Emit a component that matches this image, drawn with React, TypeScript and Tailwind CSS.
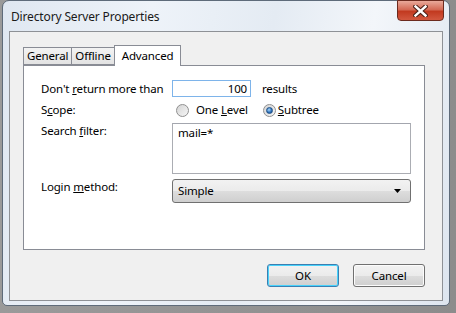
import React from 'react';

const ui = { fontFamily: '"Noto Sans", "Open Sans", sans-serif' };

const Radio: React.FC<{ checked?: boolean }> = ({ checked }) => (
  <span className="relative w-[13px] h-[13px] rounded-full border border-[#8f8f8f] bg-[linear-gradient(135deg,#d4d4d4,#f6f6f6)] flex items-center justify-center shrink-0">
    {checked && (
      <span className="w-[7px] h-[7px] rounded-full bg-[radial-gradient(circle_at_40%_35%,#a8d8fb,#2a6db8_60%,#1b4f8f)] border border-[#1d4f85]" />
    )}
  </span>
);

const Tab: React.FC<{ label: string; active?: boolean }> = ({ label, active }) => (
  <div
    className={
      active
        ? 'h-[21px] px-[7px] pt-[1px] border border-b-0 border-[#898c95] bg-white relative top-[1px] -mx-[1px] z-10 leading-[18px]'
        : 'h-[18px] px-[3px] border border-[#898c95] bg-[linear-gradient(#f3f3f3,#e3e3e3)] leading-[16px]'
    }
  >
    {label}
  </div>
);

export default function App() {
  return (
    <div className="w-[456px] h-[313px] bg-[linear-gradient(90deg,#9a9a9a,#8c8c8c)] overflow-hidden text-[#000] text-[11.5px] tracking-[-0.15px] whitespace-nowrap" style={ui}>
      <div className="ml-[2px] w-[448px] h-[306px] rounded-t-[7px] rounded-b-[5px] border border-[#5e6b7a] bg-[linear-gradient(100deg,#dfe7f1_0%,#eef3f9_30%,#e4ebf3_55%,#f3f6fa_75%,#dde5ef_100%)] flex flex-col relative">
        {/* title bar */}
        <div className="h-[30px] flex items-center pl-[8px] pt-[2px] text-[12px] text-[#1a1a1a]">
          Directory Server Properties
        </div>
        <div className="absolute right-[5px] -top-[1px] w-[47px] h-[21px] rounded-b-[4px] border border-[#6b2a1e] bg-[linear-gradient(#e9a99a_0%,#d46a55_45%,#c23a20_55%,#d2583f_100%)] flex items-center justify-center">
          <svg width="15" height="12" viewBox="0 0 15 12">
            <path d="M2.5 1.5 L12.5 10.5 M12.5 1.5 L2.5 10.5" stroke="#4a2018" strokeWidth="4.5" strokeLinecap="square" />
            <path d="M2.5 1.5 L12.5 10.5 M12.5 1.5 L2.5 10.5" stroke="#ffffff" strokeWidth="2.4" strokeLinecap="square" />
          </svg>
        </div>

        {/* client area */}
        <div className="mx-[6px] h-[270px] border border-[#8e9196] bg-[#f0f0f0] flex flex-col pl-[13px] pr-[17px] pt-[13px]">
          <div className="flex items-end h-[20px]">
            <Tab label="General" />
            <div className="-ml-[1px]"><Tab label="Offline" /></div>
            <Tab label="Advanced" active />
          </div>
          <div className="h-[185px] border border-[#898c95] bg-white pl-[17px] pt-[14px]">
            <div className="flex items-center h-[17px]">
              <span className="w-[131px]">Don't <u>r</u>eturn more than</span>
              <div className="w-[79px] h-[17px] border border-[#7eb4ea] bg-white text-right pr-[3px] leading-[15px]">100</div>
              <span className="ml-[11px]">results</span>
            </div>
            <div className="flex items-center h-[18px] mt-[4px]">
              <span className="w-[135px]">S<u>c</u>ope:</span>
              <Radio />
              <span className="ml-[7px]">One <u>L</u>evel</span>
              <span className="ml-[15px]"><Radio checked /></span>
              <span className="ml-[2px]"><u>S</u>ubtree</span>
            </div>
            <div className="flex mt-[4px]">
              <span className="w-[131px] leading-[16px]">Search <u>f</u>ilter:</span>
              <div className="w-[239px] h-[51px] border border-[#abadb3] border-t-[#a3a6ae] bg-white pl-[5px] pt-[1px] leading-[16px]">mail=*</div>
            </div>
            <div className="flex mt-[5px]">
              <span className="w-[131px] leading-[16px]">Login <u>m</u>ethod:</span>
              <div className="w-[239px] h-[24px] rounded-[3px] border border-[#707070] bg-[linear-gradient(#f2f2f2_0%,#ebebeb_50%,#dddddd_51%,#cfcfcf_100%)] flex items-center pl-[5px] pr-[9px]">
                <span className="flex-1">Simple</span>
                <svg width="7" height="4" viewBox="0 0 7 4"><path d="M0 0 H7 L3.5 4 Z" fill="#000" /></svg>
              </div>
            </div>
          </div>
          <div className="flex justify-end gap-[14px] mt-[14px]">
            <button className="w-[72px] h-[23px] rounded-[3px] border border-[#3c7fb1] shadow-[inset_0_0_0_1px_#48d2fb] bg-[linear-gradient(#f2f2f2_0%,#ebebeb_50%,#dddddd_51%,#cfcfcf_100%)]">OK</button>
            <button className="w-[72px] h-[23px] rounded-[3px] border border-[#707070] shadow-[inset_0_0_0_1px_#fcfcfc] bg-[linear-gradient(#f2f2f2_0%,#ebebeb_50%,#dddddd_51%,#cfcfcf_100%)]">Cancel</button>
          </div>
        </div>
      </div>
    </div>
  );
}
